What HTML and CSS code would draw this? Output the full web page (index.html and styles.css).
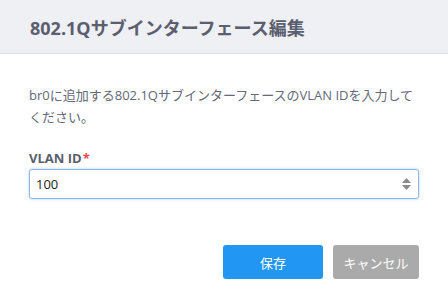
FILE: index.html
```html
<!DOCTYPE html>
<html lang="ja">
<head>
  <meta charset="UTF-8" />
  <title>802.1Qサブインターフェース編集</title>
  <link rel="stylesheet" href="styles.css">
</head>
<body>
  <div class="dialog">
    <div class="dialog-header">
      <h2>802.1Qサブインターフェース編集</h2>
    </div>
    <div class="dialog-body">
      <p class="desc">br0に追加する802.1QサブインターフェースのVLAN IDを入力してください。</p>
      <label class="field-label" for="vlanId">VLAN ID<span class="req">*</span></label>
      <div class="num-input">
        <input type="text" id="vlanId" value="100">
        <span class="spin">
          <svg width="11" height="16" viewBox="0 0 11 16"><path d="M1 7 L5.5 2 L10 7 Z" fill="#8a8a8a"/><path d="M1 9 L5.5 14 L10 9 Z" fill="#8a8a8a"/></svg>
        </span>
      </div>
    </div>
    <div class="dialog-footer">
      <button class="btn btn-primary">保存</button>
      <button class="btn btn-cancel">キャンセル</button>
    </div>
  </div>
</body>
</html>
```
FILE: styles.css
```css
* { box-sizing: border-box; }
body {
  margin: 0;
  background: #fff;
  font-family: 'Open Sans', 'Noto Sans CJK JP', sans-serif;
  color: #5f6375;
}
.dialog {
  width: 448px;
  height: 298px;
}
.dialog-header {
  height: 54px;
  background-color: #eff0f4;
  border-bottom: 1px solid #dcdde2;
  display: flex;
  align-items: center;
  padding-left: 30px;
}
.dialog-header h2 {
  margin: 0;
  font-size: 18px;
  font-weight: bold;
  color: #5a5e6e;
}
.dialog-body {
  padding: 30px 29px 0;
}
.desc {
  margin: 0;
  font-size: 13px;
  line-height: 22px;
  color: #646878;
}
.field-label {
  display: block;
  margin-top: 21px;
  font-size: 13px;
  font-weight: bold;
  color: #5a5e6e;
  line-height: 18px;
}
.req {
  color: #e5474f;
  margin-left: 1px;
}
.num-input {
  position: relative;
  margin-top: 2px;
  width: 390px;
}
.num-input input {
  width: 100%;
  height: 30px;
  border: 1px solid #8db8e8;
  border-radius: 3px;
  box-shadow: 0 0 3px rgba(100,160,230,0.5);
  padding: 0 6px;
  font-family: 'Open Sans', 'Noto Sans CJK JP', sans-serif;
  font-size: 13px;
  color: #222;
  outline: none;
}
.spin {
  position: absolute;
  right: 7px;
  top: 7px;
  display: flex;
}
.dialog-footer {
  display: flex;
  justify-content: flex-end;
  gap: 10px;
  padding: 46px 29px 0;
}
.btn {
  height: 34px;
  border: none;
  border-radius: 3px;
  color: #fff;
  font-family: 'Open Sans', 'Noto Sans CJK JP', sans-serif;
  font-size: 13px;
  cursor: pointer;
}
.btn-primary {
  width: 100px;
  background-color: #2196f3;
}
.btn-cancel {
  width: 86px;
  background-color: #aaaaaa;
}
```
